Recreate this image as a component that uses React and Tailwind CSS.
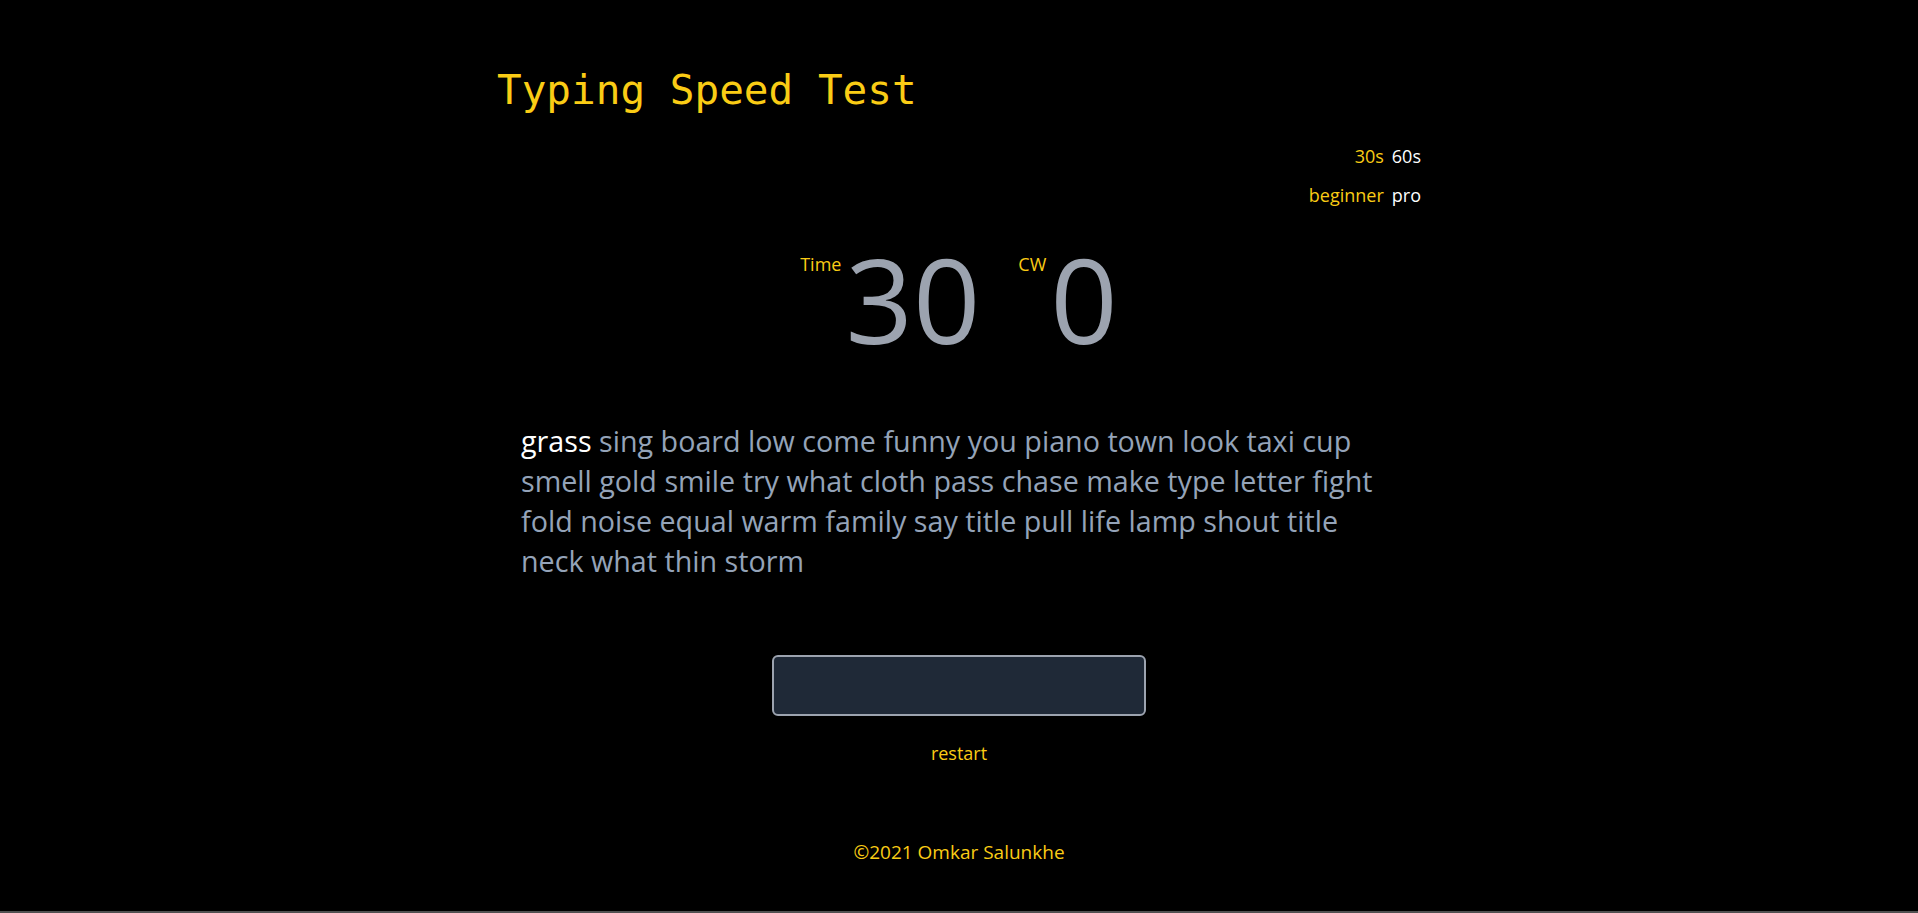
const WORDS =
  'grass sing board low come funny you piano town look taxi cup smell gold smile try what cloth pass chase make type letter fight fold noise equal warm family say title pull life lamp shout title neck what thin storm'.split(
    ' '
  );

function Stat({ label, value }) {
  return (
    <div className="flex items-start">
      <span className="mt-[10px] text-lg leading-[28px] text-[#facc15]">{label}</span>
      <span className="ml-1 text-[118px] leading-none text-[#9ca3af]">{value}</span>
    </div>
  );
}

export default function App() {
  const current = 0;

  return (
    <div
      className="flex h-[913px] flex-col bg-black"
      style={{ fontFamily: '"Open Sans", "Noto Sans", sans-serif' }}
    >
      <main className="mx-auto flex w-[924px] flex-1 flex-col">
        <h1
          className="pt-[70px] text-[41px] font-normal leading-[41px] text-[#facc15]"
          style={{ fontFamily: '"DejaVu Sans Mono", "Liberation Mono", monospace' }}
        >
          Typing Speed Test
        </h1>

        {/* duration and level */}
        <div className="mt-[31px] flex flex-col items-end gap-[11px] text-lg leading-[28px]">
          <div className="flex gap-2">
            <button className="text-[#facc15]">30s</button>
            <button className="text-white">60s</button>
          </div>
          <div className="flex gap-2">
            <button className="text-[#facc15]">beginner</button>
            <button className="text-white">pro</button>
          </div>
        </div>

        {/* counters */}
        <div className="mt-[31px] flex justify-center gap-[38px]">
          <Stat label="Time" value="30" />
          <Stat label="CW" value="0" />
        </div>

        {/* words */}
        <p className="mt-[63px] pl-6 pr-10 text-[28.7px] leading-[40px] text-[#94a3b8]">
          {WORDS.map((w, i) => (
            <span key={i} className={i === current ? 'text-white' : ''}>
              {w}{' '}
            </span>
          ))}
        </p>

        <div className="mt-[74px] flex flex-col items-center">
          <input
            type="text"
            className="h-[61px] w-[374px] rounded-md border-2 border-[#9ca3af] bg-[#1f2937] px-3 text-2xl text-white outline-none"
          />
          <button className="mt-[23px] text-lg leading-[28px] text-[#facc15]">restart</button>
        </div>

        <footer className="mt-[71px] text-center text-[19px] leading-[28px] text-[#facc15]">
          ©2021 Omkar Salunkhe
        </footer>
      </main>
      <div className="h-[2px] bg-[#505050]" />
    </div>
  );
}
